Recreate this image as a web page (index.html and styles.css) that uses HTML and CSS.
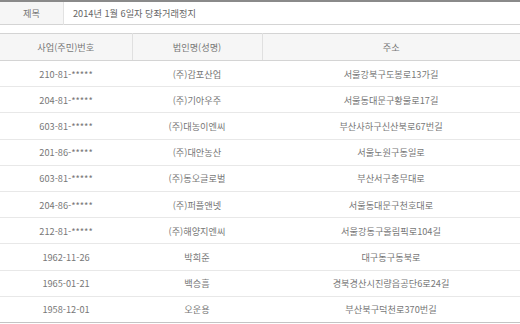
FILE: index.html
```html
<!DOCTYPE html>
<html lang="ko">
<head>
<meta charset="utf-8">
<link rel="stylesheet" href="styles.css">
</head>
<body>
<table class="title-table">
  <tr>
    <th class="title-label">제목</th>
    <td class="title-value">2014년 1월 6일자 당좌거래정지</td>
  </tr>
</table>
<table class="list-table">
  <colgroup>
    <col class="c1"><col class="c2"><col class="c3">
  </colgroup>
  <thead>
    <tr><th>사업(주민)번호</th><th>법인명(성명)</th><th>주소</th></tr>
  </thead>
  <tbody>
    <tr><td>210-81-*****</td><td>(주)감포산업</td><td>서울강북구도봉로13가길</td></tr>
    <tr><td>204-81-*****</td><td>(주)기아우주</td><td>서울동대문구황물로17길</td></tr>
    <tr><td>603-81-*****</td><td>(주)대농이엔씨</td><td>부산사하구신산북로67번길</td></tr>
    <tr><td>201-86-*****</td><td>(주)대안농산</td><td>서울노원구동일로</td></tr>
    <tr><td>603-81-*****</td><td>(주)동오글로벌</td><td>부산서구충무대로</td></tr>
    <tr><td>204-86-*****</td><td>(주)퍼플앤넷</td><td>서울동대문구천호대로</td></tr>
    <tr><td>212-81-*****</td><td>(주)해양지엔씨</td><td>서울강동구올림픽로104길</td></tr>
    <tr><td>1962-11-26</td><td>박희준</td><td>대구동구동북로</td></tr>
    <tr><td>1965-01-21</td><td>백승흠</td><td>경북경산시진량읍공단6로24길</td></tr>
    <tr><td>1958-12-01</td><td>오운용</td><td>부산북구덕천로370번길</td></tr>
  </tbody>
</table>
</body>
</html>
```
FILE: styles.css
```css
html, body {
  margin: 0;
  padding: 0;
  background: #fff;
}
body {
  width: 520px;
  font-family: "Noto Sans CJK KR", "Noto Sans", sans-serif;
  font-size: 9.2px;
  color: #666;
}
table {
  border-collapse: collapse;
  width: 520px;
  table-layout: fixed;
}
.title-table {
  border-top: 2px solid #8a8a8a;
  border-bottom: 1px solid #d4d4d4;
}
.title-label {
  width: 63px;
  height: 22px;
  padding: 0;
  background: #f6f6f6;
  border-right: 1px solid #e2e2e2;
  font-weight: normal;
  color: #777;
  text-align: center;
}
.title-value {
  padding: 0 0 0 9px;
  height: 22px;
  color: #666;
}
.list-table {
  margin-top: 8px;
  border-top: 1px solid #d4d4d4;
  border-bottom: 1px solid #c4c4c4;
}
.c1 { width: 132px; }
.c2 { width: 130px; }
.c3 { width: 258px; }
.list-table th {
  height: 26px;
  padding: 0;
  background: #f6f6f6;
  border-bottom: 1px solid #d4d4d4;
  border-left: 1px solid #e0e0e0;
  font-weight: normal;
  color: #777;
  text-align: center;
}
.list-table th:first-child {
  border-left: none;
}
.list-table td {
  height: 25.2px;
  padding: 0;
  text-align: center;
  border-bottom: 1px solid #e8e8e8;
  color: #777;
}
.list-table tr:last-child td {
  border-bottom: none;
}
```
